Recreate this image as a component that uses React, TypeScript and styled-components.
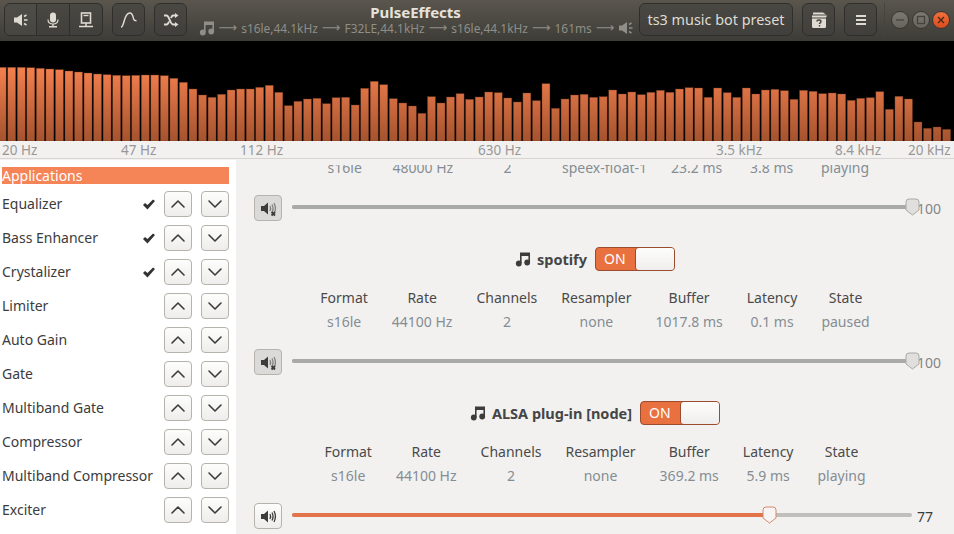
import React from "react";
import styled, { createGlobalStyle } from "styled-components";
import { ChevronDown, ChevronUp } from "lucide-react";

const BAR_TOPS = [
  22, 22, 22, 23, 25, 27, 29, 33, 36, 39, 42, 44, 46, 47, 46, 45, 45, 47, 55, 67,
  87, 105, 112, 103, 90, 87, 87, 82, 76, 97, 137, 124, 117, 115, 131, 113, 112, 135, 85, 64,
  74, 116, 129, 138, 160, 110, 129, 111, 101, 118, 111, 96, 98, 114, 126, 99, 122, 71, 145, 117,
  105, 103, 112, 110, 90, 102, 96, 104, 97, 91, 97, 87, 83, 84, 112, 84, 98, 112, 84, 102,
  90, 88, 92, 118, 91, 94, 101, 99, 102, 121, 115, 113, 95, 148, 109, 117, 186, 205, 201, 208,
];

const EFFECTS = [
  { name: "Equalizer", on: true },
  { name: "Bass Enhancer", on: true },
  { name: "Crystalizer", on: true },
  { name: "Limiter" },
  { name: "Auto Gain" },
  { name: "Gate" },
  { name: "Multiband Gate" },
  { name: "Compressor" },
  { name: "Multiband Compressor" },
  { name: "Exciter" },
];

const AXIS = [
  { label: "20 Hz", col: 1 },
  { label: "47 Hz", col: 2 },
  { label: "112 Hz", col: 3 },
  { label: "630 Hz", col: 5 },
  { label: "3.5 kHz", col: 7 },
  { label: "8.4 kHz", col: 8 },
  { label: "20 kHz", col: 9 },
];

const GlobalStyle = createGlobalStyle`
  html, body {
    margin: 0;
    padding: 0;
    background: #f2f1f0;
  }
  body {
    font-family: "Noto Sans", "DejaVu Sans", sans-serif;
  }
`;

const Window = styled.div`
  width: 954px;
  height: 534px;
  overflow: hidden;
  display: flex;
  flex-direction: column;
  background: #f2f1f0;
`;

const HeaderBar = styled.header`
  height: 41px;
  flex: none;
  box-sizing: border-box;
  display: flex;
  align-items: flex-start;
  padding: 3px 0 0 4px;
  background: linear-gradient(#5a564e, #3d3c37);
`;

const ButtonGroup = styled.div<{ $gap?: number }>`
  display: flex;
  margin-right: ${(p) => p.$gap ?? 9}px;
`;

const HeadButton = styled.div<{ $width?: number; $active?: boolean }>`
  width: ${(p) => p.$width ?? 33}px;
  height: 33px;
  box-sizing: border-box;
  display: flex;
  align-items: center;
  justify-content: center;
  color: #dfdbd2;
  border: 1px solid #2f2e2a;
  background: ${(p) =>
    p.$active ? "linear-gradient(#4f4d47, #474641)" : "linear-gradient(#4a4843, #413f3b)"};
  border-radius: 6px;
  ${ButtonGroup} > &:not(:first-child) {
    border-top-left-radius: 0;
    border-bottom-left-radius: 0;
    border-left: none;
  }
  ${ButtonGroup} > &:not(:last-child) {
    border-top-right-radius: 0;
    border-bottom-right-radius: 0;
  }
`;

const TitleBox = styled.div`
  flex: 1;
  min-width: 0;
  display: flex;
  flex-direction: column;
  align-items: center;
  margin-right: 4px;
`;

const AppTitle = styled.div`
  font-size: 15px;
  line-height: 18px;
  font-weight: 700;
  color: #e6e2da;
`;

const Pipeline = styled.div`
  height: 14px;
  display: flex;
  align-items: center;
  gap: 4px;
  font-size: 11.9px;
  line-height: 14px;
  margin-left: 2px;
  color: #8f8e87;
  white-space: nowrap;
`;

const Arrow = styled.span`
  font-family: "DejaVu Sans", sans-serif;
  font-size: 13px;
  color: #8f8e87;
`;

const PresetText = styled.span`
  font-size: 14.4px;
  color: #dfdbd2;
`;

const HeadSeparator = styled.div`
  width: 1px;
  height: 33px;
  background: #45443e;
  margin: 0 6px 0 -1px;
`;

const WindowControls = styled.div`
  display: flex;
  gap: 2.5px;
  margin-top: 8px;
  margin-right: 4px;
`;

const WindowDot = styled.div<{ $close?: boolean }>`
  width: 18px;
  height: 18px;
  box-sizing: border-box;
  border-radius: 50%;
  display: flex;
  align-items: center;
  justify-content: center;
  border: 1px solid #38372f;
  background: ${(p) =>
    p.$close ? "linear-gradient(#f0703c, #dd4b1d)" : "linear-gradient(#7b7870, #66645d)"};
  color: ${(p) => (p.$close ? "#4a2413" : "#45433d")};
`;

const SpectrumBox = styled.div`
  height: 100px;
  flex: none;
  background: #000;
  svg {
    display: block;
  }
`;

const AxisRow = styled.div`
  height: 18px;
  flex: none;
  box-sizing: border-box;
  display: grid;
  grid-template-columns: repeat(7, 119px) 73px 1fr;
  padding-left: 2px;
  border-bottom: 1px solid #d6d5d3;
  white-space: nowrap;
`;

const AxisLabel = styled.span<{ $col: number }>`
  grid-column: ${(p) => p.$col};
  font-size: 13.5px;
  line-height: 18px;
  color: #979797;
`;

const Body = styled.div`
  flex: 1;
  min-height: 0;
  display: flex;
  margin-top: 1px;
`;

const EffectsPanel = styled.aside`
  width: 236px;
  flex: none;
  box-sizing: border-box;
  background: #fff;
  padding: 7px 7px 0 2px;
  overflow: hidden;
`;

const PanelHeading = styled.div`
  height: 17px;
  background: #f58457;
  color: #fff;
  font-size: 14px;
  line-height: 18px;
  margin-bottom: 3px;
`;

const EffectRow = styled.div`
  height: 34px;
  display: flex;
  align-items: center;
  gap: 9px;
`;

const EffectName = styled.span`
  flex: 1;
  font-size: 14px;
  line-height: 18px;
  color: #3c3c3c;
  white-space: nowrap;
`;

const CheckMark = styled.svg`
  flex: none;
  color: #333;
`;

const OrderButton = styled.div`
  width: 28px;
  height: 26px;
  flex: none;
  box-sizing: border-box;
  display: flex;
  align-items: center;
  justify-content: center;
  color: #3c3c3c;
  border: 1px solid #b6b3ac;
  border-radius: 4px;
  background: linear-gradient(#fdfdfc, #eeedeb);
`;

const AppsPane = styled.main`
  flex: 1;
  min-width: 0;
  display: flex;
  padding-top: 5px;
`;

const Scroller = styled.div`
  flex: 1;
  min-width: 0;
  overflow: hidden;
  display: flex;
  flex-direction: column;
`;

const AppSection = styled.section`
  display: flex;
  flex-direction: column;
  margin-bottom: 26px;
`;

const AppHeader = styled.div`
  height: 24px;
  display: flex;
  align-items: center;
  justify-content: center;
  gap: 6px;
  margin-bottom: 17px;
  color: #3c3c3c;
`;

const AppName = styled.span`
  font-size: 14.5px;
  font-weight: 700;
  color: #454545;
`;

const Toggle = styled.div`
  width: 80px;
  height: 24px;
  box-sizing: border-box;
  display: flex;
  margin-left: 2px;
  border: 1px solid #9b4b2e;
  border-radius: 4px;
  background: #e9703f;
`;

const ToggleText = styled.span`
  flex: 1;
  color: #fff;
  font-size: 14px;
  line-height: 22px;
  padding-left: 8px;
`;

const ToggleKnob = styled.div`
  width: 38px;
  border-radius: 3px;
  background: linear-gradient(#fdfdfc, #efeeec);
  box-shadow: -1px 0 0 #9b4b2e;
`;

const Stats = styled.div<{ $clipped?: boolean }>`
  display: flex;
  justify-content: center;
  gap: 24px;
  margin-top: ${(p) => (p.$clipped ? -31 : 0)}px;
  margin-bottom: 17px;
`;

const StatColumn = styled.div`
  display: flex;
  flex-direction: column;
  align-items: center;
  gap: 4px;
  white-space: nowrap;
  font-size: 14px;
  line-height: 20px;
`;

const StatLabel = styled.span<{ $hidden?: boolean }>`
  color: #4a4a4a;
  visibility: ${(p) => (p.$hidden ? "hidden" : "visible")};
`;

const StatValue = styled.span`
  color: #858d93;
`;

const VolumeRow = styled.div`
  height: 26px;
  display: flex;
  align-items: center;
  padding-left: 18px;
`;

const MuteButton = styled.div<{ $muted: boolean }>`
  width: 28px;
  height: 26px;
  flex: none;
  box-sizing: border-box;
  display: flex;
  align-items: center;
  justify-content: center;
  color: #3c3c3c;
  border: 1px solid #b6b3ac;
  border-radius: 4px;
  margin-right: 10px;
  background: ${(p) => (p.$muted ? "#dbdad8" : "linear-gradient(#fdfdfc, #eeedeb)")};
`;

const Track = styled.div<{ $muted: boolean }>`
  width: 620px;
  height: 4px;
  flex: none;
  position: relative;
  margin-bottom: 2px;
  border-radius: 2px;
  background: ${(p) => (p.$muted ? "#a9a9a7" : "#c0bfbc")};
`;

const TrackFill = styled.div<{ $muted: boolean }>`
  height: 100%;
  border-radius: 2px;
  background: ${(p) => (p.$muted ? "#a9a9a7" : "#e2734b")};
`;

const Handle = styled.svg`
  position: absolute;
  top: -7px;
  margin-left: -7px;
`;

const VolumeValue = styled.span<{ $muted: boolean }>`
  margin-left: 5px;
  font-size: 14px;
  color: ${(p) => (p.$muted ? "#858585" : "#3c3c3c")};
`;

function SpeakerRays() {
  return (
    <svg width="16" height="16" viewBox="0 0 16 16" fill="currentColor">
      <path d="M1 5.500h3L9 2v12l-5-3.500H1z" />
      <path d="M11 4.500 13.500 3M11 8h3.500M11 11.500l2.500 1.500" stroke="currentColor" strokeWidth="1.500" fill="none" />
    </svg>
  );
}

function MicIcon() {
  return (
    <svg width="16" height="16" viewBox="0 0 16 16" fill="currentColor">
      <rect x="5" y="0.500" width="6" height="10" rx="3" />
      <path d="M3 7.500c0 3 2 4.500 5 4.500s5-1.500 5-4.500" stroke="currentColor" strokeWidth="1.200" fill="none" />
      <path d="M7.300 12h1.400v2H12v1.500H4V14h3.300z" />
    </svg>
  );
}

function DeviceIcon() {
  return (
    <svg width="16" height="16" viewBox="0 0 16 16" fill="none" stroke="currentColor">
      <rect x="3.500" y="1" width="9" height="10" strokeWidth="1.600" />
      <path d="M5.500 3.500h5" strokeWidth="1.400" />
      <path d="M8 11v3M1 14.500h14" strokeWidth="1.500" />
    </svg>
  );
}

function WaveIcon() {
  return (
    <svg width="18" height="16" viewBox="0 0 18 16" fill="none" stroke="currentColor" strokeWidth="1.500">
      <path d="M1 15c1.500 0 2-1.500 3-5.500S7 1 10 1c2.500 0 3 3.500 3.600 6 .4 1.300.9 1.800 2.900 1.800" />
    </svg>
  );
}

function ShuffleIcon() {
  return (
    <svg width="16" height="16" viewBox="0 0 16 16" fill="none" stroke="currentColor" strokeWidth="2">
      <path d="M1 3.500h2.500c3 0 3.500 9 6.500 9h2M1 12.500h2.500c1.200 0 2-1.500 2.500-3M8 6c.5-1.300 1-2.500 2-2.500h2" />
      <path d="M12 1v5l3.500-2.500zM12 10v5l3.500-2.500z" fill="currentColor" stroke="none" />
    </svg>
  );
}

function HelpBoxIcon() {
  return (
    <svg width="18" height="18" viewBox="0 0 18 18" fill="currentColor">
      <path d="M3 1.500h10l3 2H3zM2 4.500h15l-1 2H2z" />
      <path d="M2 7.500h14v8a1.500 1.500 0 0 1-1.500 1.500h-11A1.500 1.500 0 0 1 2 15.500z" />
      <path d="M7 10.500c0-1 .8-1.500 2-1.500s2 .5 2 1.500c0 1.500-1.500 1.300-1.500 2.500M9.500 14v1.500" stroke="#45433e" strokeWidth="1.400" fill="none" />
    </svg>
  );
}

function MenuIcon() {
  return (
    <svg width="14" height="14" viewBox="0 0 14 14" fill="currentColor">
      <path d="M2 2h10v2H2zM2 6h10v2H2zM2 10h10v2H2z" />
    </svg>
  );
}

function NoteIcon({ size = 16 }: { size?: number }) {
  return (
    <svg width={size} height={size} viewBox="0 0 16 16" fill="currentColor">
      <path d="M5 1.500h10v10h-1.600V5H6.600v7H5z" />
      <circle cx="3.800" cy="12.500" r="2.900" />
      <circle cx="12.200" cy="11.500" r="2.900" />
    </svg>
  );
}

function VolumeIcon({ muted }: { muted: boolean }) {
  return (
    <svg width="17" height="17" viewBox="0 0 17 17" fill="currentColor">
      <path d="M1 6h3l4-3.500v12L4 11H1z" />
      <g fill="none" stroke="currentColor" strokeWidth="1.300" opacity={muted ? 0.55 : 1}>
        <path d="M10 6c.8 1.500.8 3.500 0 5" />
        <path d="M12 4.500c1.300 2.500 1.300 5.500 0 8" />
        <path d="M14 3c1.800 3.500 1.800 7.500 0 11" />
      </g>
      {muted && <path d="M11.500 12l3.500 3.500m0-3.500-3.500 3.500" stroke="currentColor" strokeWidth="1.800" />}
    </svg>
  );
}

function Spectrum() {
  const pitch = 954 / 100;
  return (
    <SpectrumBox>
      <svg width="954" height="100" viewBox="0 0 954 100">
        <defs>
          <linearGradient id="bar" gradientUnits="userSpaceOnUse" x1="0" y1="0" x2="0" y2="100">
            <stop offset="0" stopColor="#ff8a55" />
            <stop offset="0.3" stopColor="#f07e4d" />
            <stop offset="1" stopColor="#a5532f" />
          </linearGradient>
        </defs>
        {BAR_TOPS.map((top, i) => {
          const y = 19 + top / 3;
          return (
            <rect
              key={i}
              x={i * pitch - 1.8}
              y={y}
              width={pitch - 1.6}
              height={100 - y}
              fill="url(#bar)"
              stroke="#6b3820"
              strokeOpacity="0.7"
              strokeWidth="0.5"
            />
          );
        })}
      </svg>
    </SpectrumBox>
  );
}

function Effect({ name, on }: { name: string; on?: boolean }) {
  return (
    <EffectRow>
      <EffectName>{name}</EffectName>
      {on && (
        <CheckMark width="12" height="11" viewBox="0 0 12 11" fill="currentColor">
          <path d="M0 6l2-2 2.500 2L10 .5 12 2 4.500 10.500z" />
        </CheckMark>
      )}
      <OrderButton>
        <ChevronUp size={24} strokeWidth={1.6} />
      </OrderButton>
      <OrderButton>
        <ChevronDown size={24} strokeWidth={1.6} />
      </OrderButton>
    </EffectRow>
  );
}

const STAT_LABELS = ["Format", "Rate", "Channels", "Resampler", "Buffer", "Latency", "State"];

function StatsRow({ values, clipped }: { values: string[]; clipped?: boolean }) {
  return (
    <Stats $clipped={clipped}>
      {STAT_LABELS.map((label, i) => (
        <StatColumn key={label}>
          <StatLabel $hidden={clipped}>{label}</StatLabel>
          <StatValue>{values[i]}</StatValue>
        </StatColumn>
      ))}
    </Stats>
  );
}

function Volume({ value, muted }: { value: number; muted: boolean }) {
  const pct = `${value}%`;
  return (
    <VolumeRow>
      <MuteButton $muted={muted}>
        <VolumeIcon muted={muted} />
      </MuteButton>
      <Track $muted={muted}>
        <TrackFill $muted={muted} style={{ width: pct }} />
        <Handle width="15" height="18" viewBox="0 0 15 18" style={{ left: pct }}>
          <path
            d="M1 4a3 3 0 0 1 3-3h7a3 3 0 0 1 3 3v8l-6.500 5L1 12z"
            fill={muted ? "#e0dfdd" : "#f6f5f4"}
            stroke={muted ? "#a9a9a7" : "#d5896c"}
          />
        </Handle>
      </Track>
      <VolumeValue $muted={muted}>{value}</VolumeValue>
    </VolumeRow>
  );
}

function AppEntry({ name, values, volume, muted }: { name: string; values: string[]; volume: number; muted: boolean }) {
  return (
    <AppSection>
      <AppHeader>
        <NoteIcon />
        <AppName>{name}</AppName>
        <Toggle>
          <ToggleText>ON</ToggleText>
          <ToggleKnob />
        </Toggle>
      </AppHeader>
      <StatsRow values={values} />
      <Volume value={volume} muted={muted} />
    </AppSection>
  );
}

export default function App() {
  return (
    <Window>
      <GlobalStyle />
      <HeaderBar>
        <ButtonGroup>
          <HeadButton $active>
            <SpeakerRays />
          </HeadButton>
          <HeadButton>
            <MicIcon />
          </HeadButton>
          <HeadButton>
            <DeviceIcon />
          </HeadButton>
        </ButtonGroup>
        <ButtonGroup $gap={9}>
          <HeadButton>
            <WaveIcon />
          </HeadButton>
        </ButtonGroup>
        <ButtonGroup $gap={9}>
          <HeadButton>
            <ShuffleIcon />
          </HeadButton>
        </ButtonGroup>
        <TitleBox>
          <AppTitle>PulseEffects</AppTitle>
          <Pipeline>
            <NoteIcon />
            <Arrow>⟶</Arrow>
            <span>s16le,44.1kHz</span>
            <Arrow>⟶</Arrow>
            <span>F32LE,44.1kHz</span>
            <Arrow>⟶</Arrow>
            <span>s16le,44.1kHz</span>
            <Arrow>⟶</Arrow>
            <span>161ms</span>
            <Arrow>⟶</Arrow>
            <SpeakerRays />
          </Pipeline>
        </TitleBox>
        <ButtonGroup>
          <HeadButton $width={154}>
            <PresetText>ts3 music bot preset</PresetText>
          </HeadButton>
        </ButtonGroup>
        <ButtonGroup>
          <HeadButton>
            <HelpBoxIcon />
          </HeadButton>
        </ButtonGroup>
        <ButtonGroup $gap={8}>
          <HeadButton>
            <MenuIcon />
          </HeadButton>
        </ButtonGroup>
        <HeadSeparator />
        <WindowControls>
          <WindowDot>
            <svg width="10" height="10" viewBox="0 0 10 10" stroke="currentColor" strokeWidth="1.300">
              <path d="M1 5h8" />
            </svg>
          </WindowDot>
          <WindowDot>
            <svg width="10" height="10" viewBox="0 0 10 10" fill="none" stroke="currentColor" strokeWidth="1.300">
              <rect x="1.500" y="1.500" width="7" height="7" />
            </svg>
          </WindowDot>
          <WindowDot $close>
            <svg width="10" height="10" viewBox="0 0 10 10" stroke="currentColor" strokeWidth="1.300">
              <path d="M2 2l6 6m0-6-6 6" />
            </svg>
          </WindowDot>
        </WindowControls>
      </HeaderBar>
      <Spectrum />
      <AxisRow>
        {AXIS.map((a) => (
          <AxisLabel key={a.label} $col={a.col}>
            {a.label}
          </AxisLabel>
        ))}
      </AxisRow>
      <Body>
        <EffectsPanel>
          <PanelHeading>Applications</PanelHeading>
          {EFFECTS.map((e) => (
            <Effect key={e.name} name={e.name} on={e.on} />
          ))}
        </EffectsPanel>
        <AppsPane>
          <Scroller>
            <AppSection>
              <StatsRow
                clipped
                values={["s16le", "48000 Hz", "2", "speex-float-1", "23.2 ms", "3.8 ms", "playing"]}
              />
              <Volume value={100} muted />
            </AppSection>
            <AppEntry
              name="spotify"
              values={["s16le", "44100 Hz", "2", "none", "1017.8 ms", "0.1 ms", "paused"]}
              volume={100}
              muted
            />
            <AppEntry
              name="ALSA plug-in [node]"
              values={["s16le", "44100 Hz", "2", "none", "369.2 ms", "5.9 ms", "playing"]}
              volume={77}
              muted={false}
            />
          </Scroller>
        </AppsPane>
      </Body>
    </Window>
  );
}
